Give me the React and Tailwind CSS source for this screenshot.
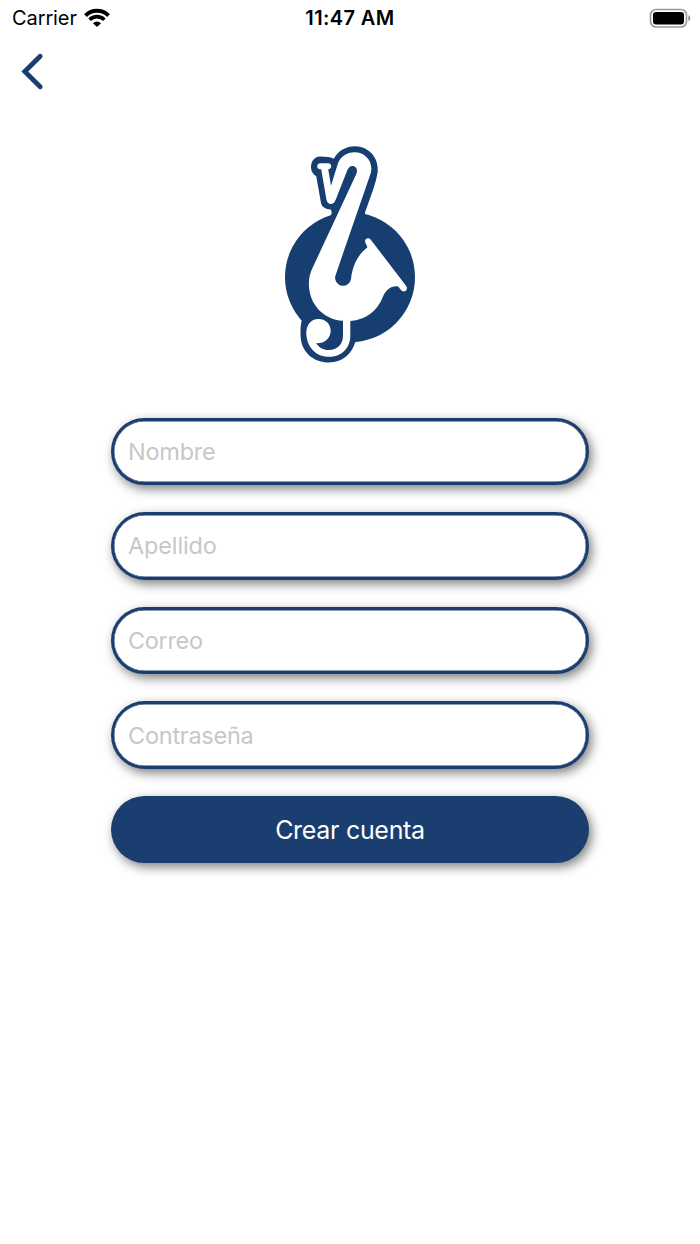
import { useState } from 'react'

const fields = [
  { id: 'nombre', label: 'Nombre', type: 'text', spacing: 'tracking-[-0.25px]' },
  { id: 'apellido', label: 'Apellido', type: 'text', spacing: 'tracking-[-0.15px]' },
  { id: 'correo', label: 'Correo', type: 'email', spacing: 'tracking-[-0.35px]' },
  { id: 'contrasena', label: 'Contraseña', type: 'password', spacing: 'tracking-[-0.25px]' },
]

function StatusBar() {
  return (
    <div className="grid grid-cols-3 items-center h-9 pl-3 pr-[9px] text-black text-[20px]">
      <div className="flex items-center gap-[7px]">
        <span className="tracking-[-0.1px]">Carrier</span>
        <svg width="26" height="20" viewBox="84 7 26 20" fill="none" stroke="currentColor" strokeWidth="4">
          <path d="M85.5 14.6A16.3 16.3 0 0 1 108.5 14.6" />
          <path d="M89.6 18.7A10.5 10.5 0 0 1 104.4 18.7" strokeWidth="3.7" />
          <path d="M97 26L93 22.2A5.8 5.8 0 0 1 101 22.2Z" fill="currentColor" stroke="none" />
        </svg>
      </div>
      <span className="text-center font-semibold tracking-[0.4px] -ml-[3px]">11:47 AM</span>
      <svg className="justify-self-end" width="42" height="20" viewBox="649 7 42 20">
        <rect x="650.5" y="8.5" width="36" height="17.5" rx="5.5" fill="none" stroke="#999" strokeWidth="1.6" />
        <rect x="653" y="11" width="31" height="12.5" rx="3" fill="#000" />
        <path d="M688.4 14.2C690.8 15.2 690.8 19.2 688.4 20.2Z" fill="#888" />
      </svg>
    </div>
  )
}

function Logo() {
  return (
    <svg width="140" height="226" viewBox="280 142 140 226">
      <g fill="#173e70">
        <circle cx="350" cy="277.2" r="65" />
        <path d="M328 218C331 216.5 332.5 213.5 331 209.7C325 209 322 207 321 203L316.2 176C312.5 174 310.7 170 311 166C311.7 160 315 157 319.5 156.5L328 157Q331 157 333.8 158.8C338 151 346 146.3 355 146.3C369 146.3 379 158 377.7 172C377 177 375 184 373 190L365 212.5Q364.5 214 366 214.5L350 240Z" />
        <path d="M301.8 320.5C300.3 325 300.3 333 301 340C303 353 314 362.5 329 362.5C342 362.5 352 354 355.3 342L350 310L298 315Z" />
      </g>
      <path
        fill="#fff"
        d="M320.3 163.3H328.2C332.3 163.3 332.3 169.2 328.2 169.2L331 185.8L337.8 163.8C340.5 156.5 347 152.3 354.5 152.3C366 152.3 373.5 162.5 370.8 173L343.5 252L335.2 276.5A7.9 7.9 0 0 0 351 279C352.5 265 358.5 254 367.5 247.3L365.5 243C363.5 239 368.5 236.3 371 240L406.2 286C408.8 290 404 293.5 401 290L398 286.5C391 285.5 385.5 290.5 382.8 297C377 311.5 365.5 320 350.3 320.9V336C350 349 341 356.8 329 356.8C315 356.8 306.4 346 306.3 333C306.3 325 311 319 318.5 319C325.5 319 330.8 324 330.7 331C330.5 338.5 324.5 343.8 316 343.3C319.5 348 324 350.2 329 350.1C337 350 342.9 344.5 343 336V320.8C323 319.5 309 304 308.9 284C308.8 277.5 310.2 273 312.5 268L356.3 174C358 170.5 356.5 166 352.5 166C349.5 166 348.2 168 347 171L335.8 199.5C333.8 205.5 327.8 205.5 326.5 200L321.2 169.2H320.3C316.2 169.2 316.2 163.3 320.3 163.3Z"
      />
    </svg>
  )
}

export default function App() {
  const [form, setForm] = useState({ nombre: '', apellido: '', correo: '', contrasena: '' })

  return (
    <div className="min-h-screen bg-white font-['Inter',sans-serif]">
      <StatusBar />

      {/* Back */}
      <button className="block ml-5 mt-4" aria-label="Volver">
        <svg width="26" height="40" viewBox="20 52 26 40" fill="none" stroke="#1a3e6f" strokeWidth="4.8" strokeLinecap="round" strokeLinejoin="miter">
          <path d="M40.2 56.2L24.8 71.5L40.2 86.8" />
        </svg>
      </button>

      <div className="flex justify-center mt-[50px]">
        <Logo />
      </div>

      {/* Form */}
      <form
        onSubmit={e => e.preventDefault()}
        className="flex flex-col gap-[27.2px] w-[478px] mx-auto mt-[49.6px]"
      >
        {fields.map(f => (
          <input
            key={f.id}
            type={f.type}
            value={form[f.id]}
            onChange={e => setForm({ ...form, [f.id]: e.target.value })}
            placeholder={f.label}
            className={`h-[67.4px] rounded-full border-[3px] border-[#1a3e6f] bg-white px-[14px] text-[23.5px] placeholder-[#c7c7c7] focus:outline-none shadow-[inset_0_0_0_0.4px_#1a3e6f,3px_4px_11px_rgba(0,0,0,0.5)] ${f.spacing}`}
          />
        ))}
        <button
          type="submit"
          className="h-[67.4px] pt-[2px] rounded-full bg-[#1a3e6f] text-white text-[25px] tracking-[-0.3px] shadow-[3px_4px_11px_rgba(0,0,0,0.5)]"
        >
          Crear cuenta
        </button>
      </form>
    </div>
  )
}
